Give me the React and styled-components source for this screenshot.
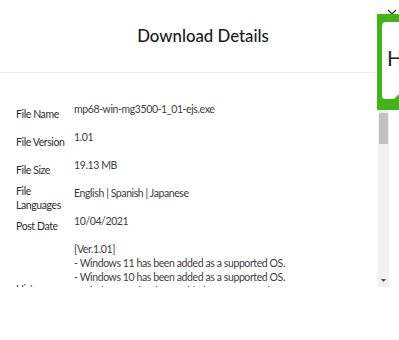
import React from 'react';
import styled, { createGlobalStyle } from 'styled-components';

const rows = [
  { label: 'File Name', value: ['mp68-win-mg3500-1_01-ejs.exe'] },
  { label: 'File Version', value: ['1.01'] },
  { label: 'File Size', value: ['19.13 MB'] },
  { label: 'File Languages', value: ['English | Spanish | Japanese'] },
  { label: 'Post Date', value: ['10/04/2021'] },
  {
    label: 'History',
    value: [
      '[Ver.1.01]',
      '- Windows 11 has been added as a supported OS.',
      '- Windows 10 has been added as a supported OS.',
      '- Windows 8.1 has been added as a supported OS.',
      '[Ver.1.00]',
      '- Initial release.',
    ],
  },
];

function App() {
  return (
    <>
      <GlobalStyle />
      <Page>
        <Modal>
          <Header>
            <Title>Download Details</Title>
            <Close aria-label="Close">
              <svg width="10" height="10" viewBox="0 0 10 10">
                <path d="M1 1L9 9M9 1L1 9" stroke="#333" strokeWidth="1.3" />
              </svg>
            </Close>
          </Header>
          <Body>
            <Content>
              {rows.map((row) => (
                <Row key={row.label}>
                  <Label>{row.label}</Label>
                  <Value>
                    {row.value.map((line, i) => (
                      <Line key={i}>{line}</Line>
                    ))}
                  </Value>
                </Row>
              ))}
            </Content>
            <ScrollBar>
              <ScrollButton />
              <Track>
                <Thumb />
              </Track>
              <ScrollButton $down>
                <svg width="5" height="3" viewBox="0 0 5 3">
                  <path d="M0 0H5L2.5 3Z" fill="#505050" />
                </svg>
              </ScrollButton>
            </ScrollBar>
          </Body>
        </Modal>
        <HelpTab>
          <svg width="105" height="96" viewBox="0 0 105 96">
            <path
              d="M9 8H100V74H28L17 85H8Q5 85 5 82V12Q5 8 9 8Z"
              fill="#fff"
            />
          </svg>
          <HelpText>Help</HelpText>
        </HelpTab>
      </Page>
    </>
  );
}

const GlobalStyle = createGlobalStyle`
  html, body {
    margin: 0;
    padding: 0;
    overflow: hidden;
    background: #fff;
    font-family: Lato, "Liberation Sans", sans-serif;
  }
`;

const Page = styled.div`
  width: 399px;
  height: 340px;
  overflow: hidden;
  position: relative;
`;

const Modal = styled.div`
  width: 406px;
  display: flex;
  flex-direction: column;
  position: relative;
`;

const Header = styled.div`
  height: 72px;
  display: flex;
  align-items: center;
  justify-content: center;
  border-bottom: 1px solid #ebebeb;
`;

const Title = styled.h2`
  margin: 0;
  font-size: 16.8px;
  font-weight: 500;
  color: #1a1a1a;
  padding-bottom: 1px;
`;

const Close = styled.button`
  position: absolute;
  top: 9px;
  left: 387px;
  width: 10px;
  height: 10px;
  padding: 0;
  border: 0;
  background: none;
  display: flex;
`;

const Body = styled.div`
  margin: 24px 17px 0 0;
  height: 190px;
  display: flex;
`;

const Content = styled.div`
  flex: 1;
  overflow: hidden;
  padding: 3px 0 0 16px;
`;

const Row = styled.div`
  display: grid;
  grid-template-columns: 58px 1fr;
  font-size: 10.5px;
  letter-spacing: -0.4px;
  line-height: 14px;
`;

const Label = styled.div`
  align-self: center;
  color: #2e2e2e;
`;

const Value = styled.div`
  padding: 2px 16px 12px 0;
  color: #3d3d3d;
`;

const Line = styled.div``;

const ScrollBar = styled.div`
  width: 11px;
  display: flex;
  flex-direction: column;
  background: #f1f1f1;
`;

const ScrollButton = styled.div`
  height: 14px;
  display: flex;
  align-items: center;
  justify-content: center;
  padding-top: ${(p) => (p.$down ? '1px' : '0')};
`;

const Track = styled.div`
  flex: 1;
`;

const Thumb = styled.div`
  height: 33px;
  margin-top: 1px;
  border: 1px solid #f1f1f1;
  box-sizing: border-box;
  background: #c1c1c1;
`;

const HelpTab = styled.div`
  position: fixed;
  top: 14px;
  left: 377px;
  width: 105px;
  height: 96px;
  background: #42b31a;
`;

const HelpText = styled.span`
  position: absolute;
  left: 10px;
  top: 32px;
  font-size: 21px;
  line-height: 24px;
  color: #222;
`;

export default App;
